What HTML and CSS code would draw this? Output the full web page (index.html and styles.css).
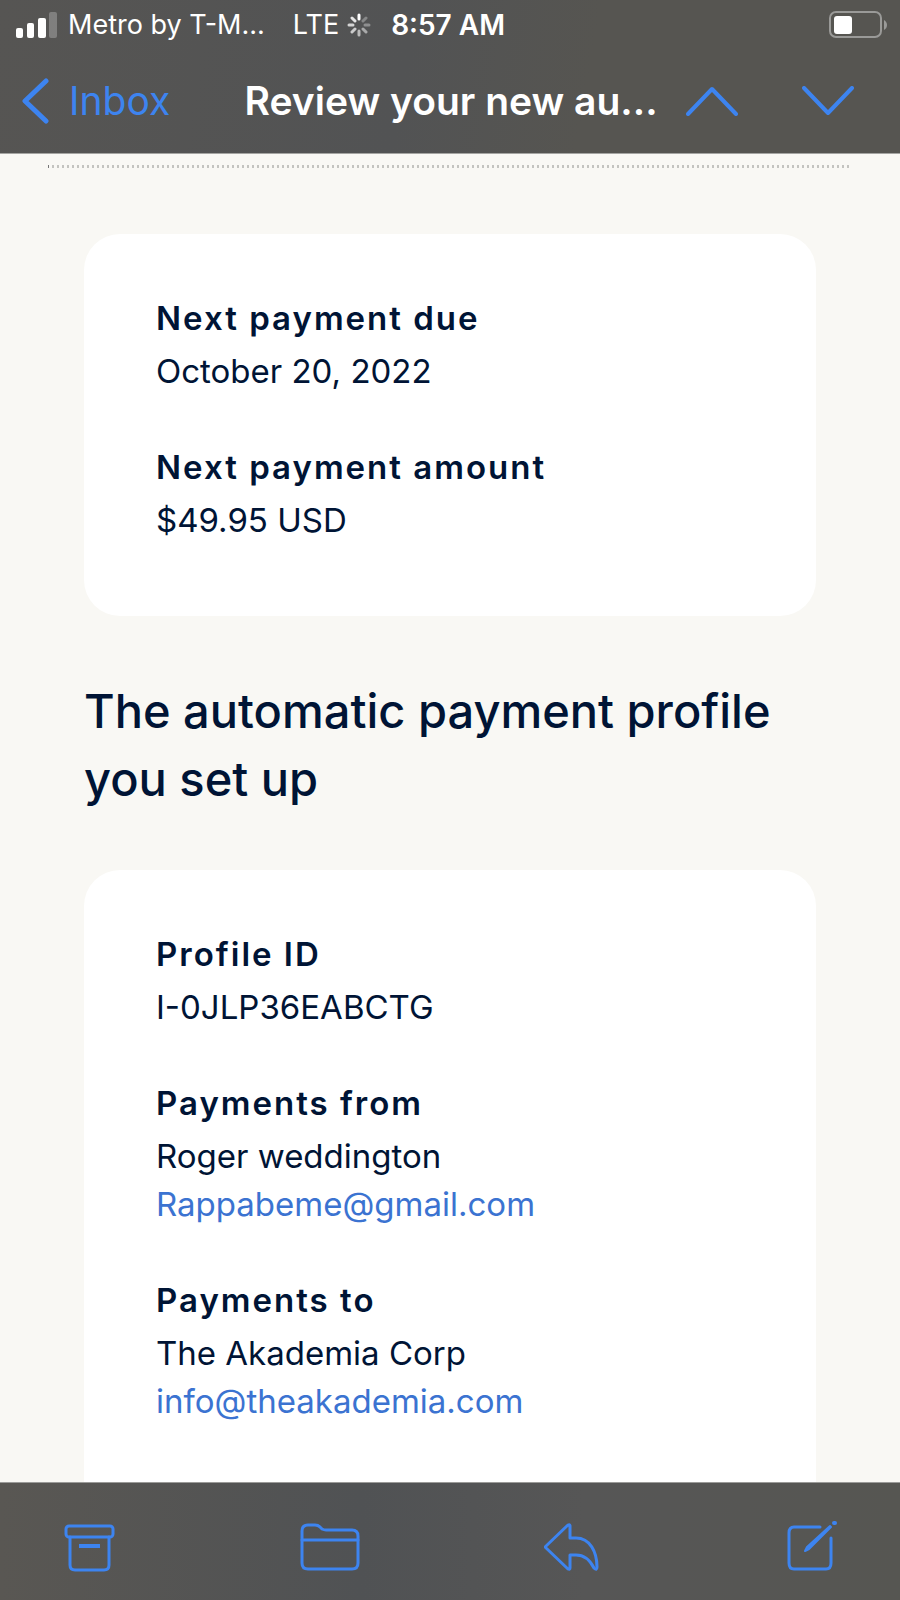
FILE: index.html
```html
<!DOCTYPE html>
<html lang="en">
  <head>
    <meta charset="utf-8">
    <meta name="viewport" content="width=device-width, initial-scale=1">
    <title>Review your new automatic payment</title>
    <link rel="stylesheet" href="styles.css">
  </head>
  <body>
    <header class="top">
      <div class="status">
        <svg class="signal" width="42" height="26" viewBox="0 0 42 26" fill="#fff">
          <rect x="0" y="16" width="7" height="10" rx="2" />
          <rect x="11" y="11" width="7" height="15" rx="2" />
          <rect x="22" y="6" width="8" height="20" rx="2" />
          <rect x="33" y="0" width="8" height="26" rx="2" opacity="0.25" />
        </svg>
        <span class="carrier">Metro by T-M...</span>
        <span class="network">LTE</span>
        <svg class="spinner" width="24" height="24" viewBox="0 0 24 24" stroke="#fff" stroke-width="3" stroke-linecap="round">
          <path d="M12 2v4" />
          <path d="M5 5l3 3" opacity="0.85" />
          <path d="M2 12h4" opacity="0.75" />
          <path d="M5 19l3-3" opacity="0.7" />
          <path d="M12 22v-4" opacity="0.6" />
          <path d="M19 19l-3-3" opacity="0.5" />
          <path d="M22 12h-4" opacity="0.35" />
          <path d="M19 5l-3 3" opacity="0.3" />
        </svg>
        <span class="time">8:57 AM</span>
        <svg class="battery" width="59" height="28" viewBox="0 0 59 28">
          <rect x="1" y="1" width="51" height="25" rx="6" fill="none" stroke="#9a9a98" stroke-width="2" />
          <rect x="5" y="5" width="18" height="18" rx="3" fill="#fff" />
          <path d="M55 9c4 2 4 8 0 10z" fill="#9a9a98" />
        </svg>
      </div>
      <nav class="nav">
        <a class="back" href="#">
          <svg width="27" height="46" viewBox="0 0 27 46">
            <path d="M24 3L3 23l21 20" stroke-width="5" />
          </svg>
          Inbox
        </a>
        <h1 class="title">Review your new au...</h1>
        <div class="arrows">
          <button type="button" aria-label="Previous message">
            <svg width="52" height="30" viewBox="0 0 52 30">
              <path d="M2 28L26 3l24 25" stroke-width="4" />
            </svg>
          </button>
          <button type="button" aria-label="Next message">
            <svg width="52" height="30" viewBox="0 0 52 30">
              <path d="M2 2l24 25L50 2" stroke-width="4" />
            </svg>
          </button>
        </div>
      </nav>
    </header>

    <main class="message">
      <div class="divider"></div>

      <dl class="card">
        <div class="field">
          <dt>Next payment due</dt>
          <dd>October 20, 2022</dd>
        </div>
        <div class="field">
          <dt>Next payment amount</dt>
          <dd>$49.95 USD</dd>
        </div>
      </dl>

      <h2 class="heading">The automatic payment profile you set up</h2>

      <dl class="card card-profile">
        <div class="field">
          <dt>Profile ID</dt>
          <dd>I-0JLP36EABCTG</dd>
        </div>
        <div class="field">
          <dt>Payments from</dt>
          <dd>Roger weddington</dd>
          <dd><a href="mailto:Rappabeme@gmail.com">Rappabeme@gmail.com</a></dd>
        </div>
        <div class="field">
          <dt>Payments to</dt>
          <dd>The Akademia Corp</dd>
          <dd><a href="mailto:info@theakademia.com">info@theakademia.com</a></dd>
        </div>
      </dl>
    </main>

    <footer class="toolbar">
      <button type="button" aria-label="Archive">
        <svg width="51" height="52" viewBox="0 0 51 52" stroke-width="3">
          <rect x="2" y="6" width="47" height="11" rx="3" />
          <path d="M6 17v28q0 5 5 5h29q5 0 5-5V17" />
          <path d="M15 26h21" stroke-width="4" stroke-linecap="butt" />
        </svg>
      </button>
      <button type="button" aria-label="Move to folder">
        <svg width="60" height="52" viewBox="0 0 60 52" stroke-width="3">
          <path d="M2 11q0-6 6-6h7q3 0 5 2l2 2q2 1 4 1h26q6 0 6 6v27q0 6-6 6H8q-6 0-6-6z" />
          <path d="M2 20h56" />
        </svg>
      </button>
      <button type="button" aria-label="Reply">
        <svg width="57" height="52" viewBox="0 0 57 52" stroke-width="3">
          <path d="M1 27L24 5q2-1 2 1v12h6c14 0 21 14 21 29q0 4-3 1c-4-8-10-13-18-13h-6v13q0 2-2 1z" />
        </svg>
      </button>
      <button type="button" aria-label="Compose">
        <svg width="52" height="52" viewBox="0 0 52 52" stroke-width="3">
          <path d="M34 7H8q-5 0-5 6v30q0 6 5 6h32q5 0 5-6V18" />
          <path d="M44 6l1 1L23 29l-4 2 2-4z" fill="#3d84f0" stroke-width="2" />
          <path d="M48 3l1 0" stroke-width="4" />
        </svg>
      </button>
    </footer>
  </body>
</html>
```
FILE: styles.css
```css
* {
  box-sizing: border-box;
}
body {
  display: flex;
  flex-direction: column;
  height: 100vh;
  margin: 0;
  background: #f9f8f4;
  color: #001435;
  font-family: Inter, "Liberation Sans", sans-serif;
}
svg {
  display: block;
  flex: none;
}
button {
  padding: 0;
  border: 0;
  background: none;
  cursor: pointer;
}
a {
  color: #3b73d1;
  text-decoration: none;
}

/* status bar and navigation */
.top {
  flex: none;
  border-bottom: 1px solid #a5a5a2;
  background: linear-gradient(100deg, #565553, #525354 45%, #565551 65%);
  color: #fff;
}
.status {
  display: flex;
  align-items: center;
  height: 50px;
  padding: 0 12px 0 16px;
  font-size: 27px;
  line-height: 50px;
  white-space: nowrap;
}
.carrier {
  margin-left: 10px;
}
.network {
  margin-left: 28px;
}
.spinner {
  margin-left: 8px;
}
.time {
  margin-left: 20px;
  font-size: 28px;
  font-weight: 600;
}
.battery {
  margin-left: auto;
}
.nav {
  display: flex;
  align-items: center;
  height: 103px;
  padding: 0 46px 2px 22px;
}
.nav svg,
.toolbar svg {
  fill: none;
  stroke: #3d84f0;
  stroke-linecap: round;
  stroke-linejoin: round;
}
.back {
  display: flex;
  align-items: center;
  gap: 20px;
  color: #3d84f0;
  font-size: 39px;
}
.title {
  flex: 1;
  margin: 0;
  padding-left: 46px;
  font-size: 39px;
  font-weight: 600;
  text-align: center;
  white-space: nowrap;
}
.arrows {
  display: flex;
  gap: 64px;
}

/* message body */
.message {
  flex: 1;
  min-height: 0;
  padding: 11px 84px 0;
  overflow-y: auto;
  scrollbar-width: none;
}
.divider {
  height: 3px;
  margin: 0 -36px 66px;
  border-left: 1px solid #777;
  background: repeating-linear-gradient(90deg, transparent 0 3px, #c4c4c0 3px 5px);
}
.card {
  margin: 0;
  padding: 60px 72px 72px;
  border-radius: 36px;
  background: #fff;
}
.card-profile {
  padding-bottom: 120px;
}
.field + .field {
  margin-top: 48px;
}
.field dt {
  margin-bottom: 5px;
  font-size: 33px;
  font-weight: 600;
  line-height: 48px;
  letter-spacing: 2px;
}
.field dd {
  margin: 0;
  font-size: 33px;
  line-height: 48px;
}
.heading {
  margin: 61px 0 57px;
  font-size: 47px;
  font-weight: 500;
  line-height: 68px;
}

/* bottom toolbar */
.toolbar {
  display: flex;
  flex: none;
  justify-content: space-between;
  height: 118px;
  padding: 37px 62px 29px 64px;
  border-top: 1px solid #9b9b99;
  background: linear-gradient(90deg, #595753, #505254 40%, #565656 65%, #565652);
}
```
